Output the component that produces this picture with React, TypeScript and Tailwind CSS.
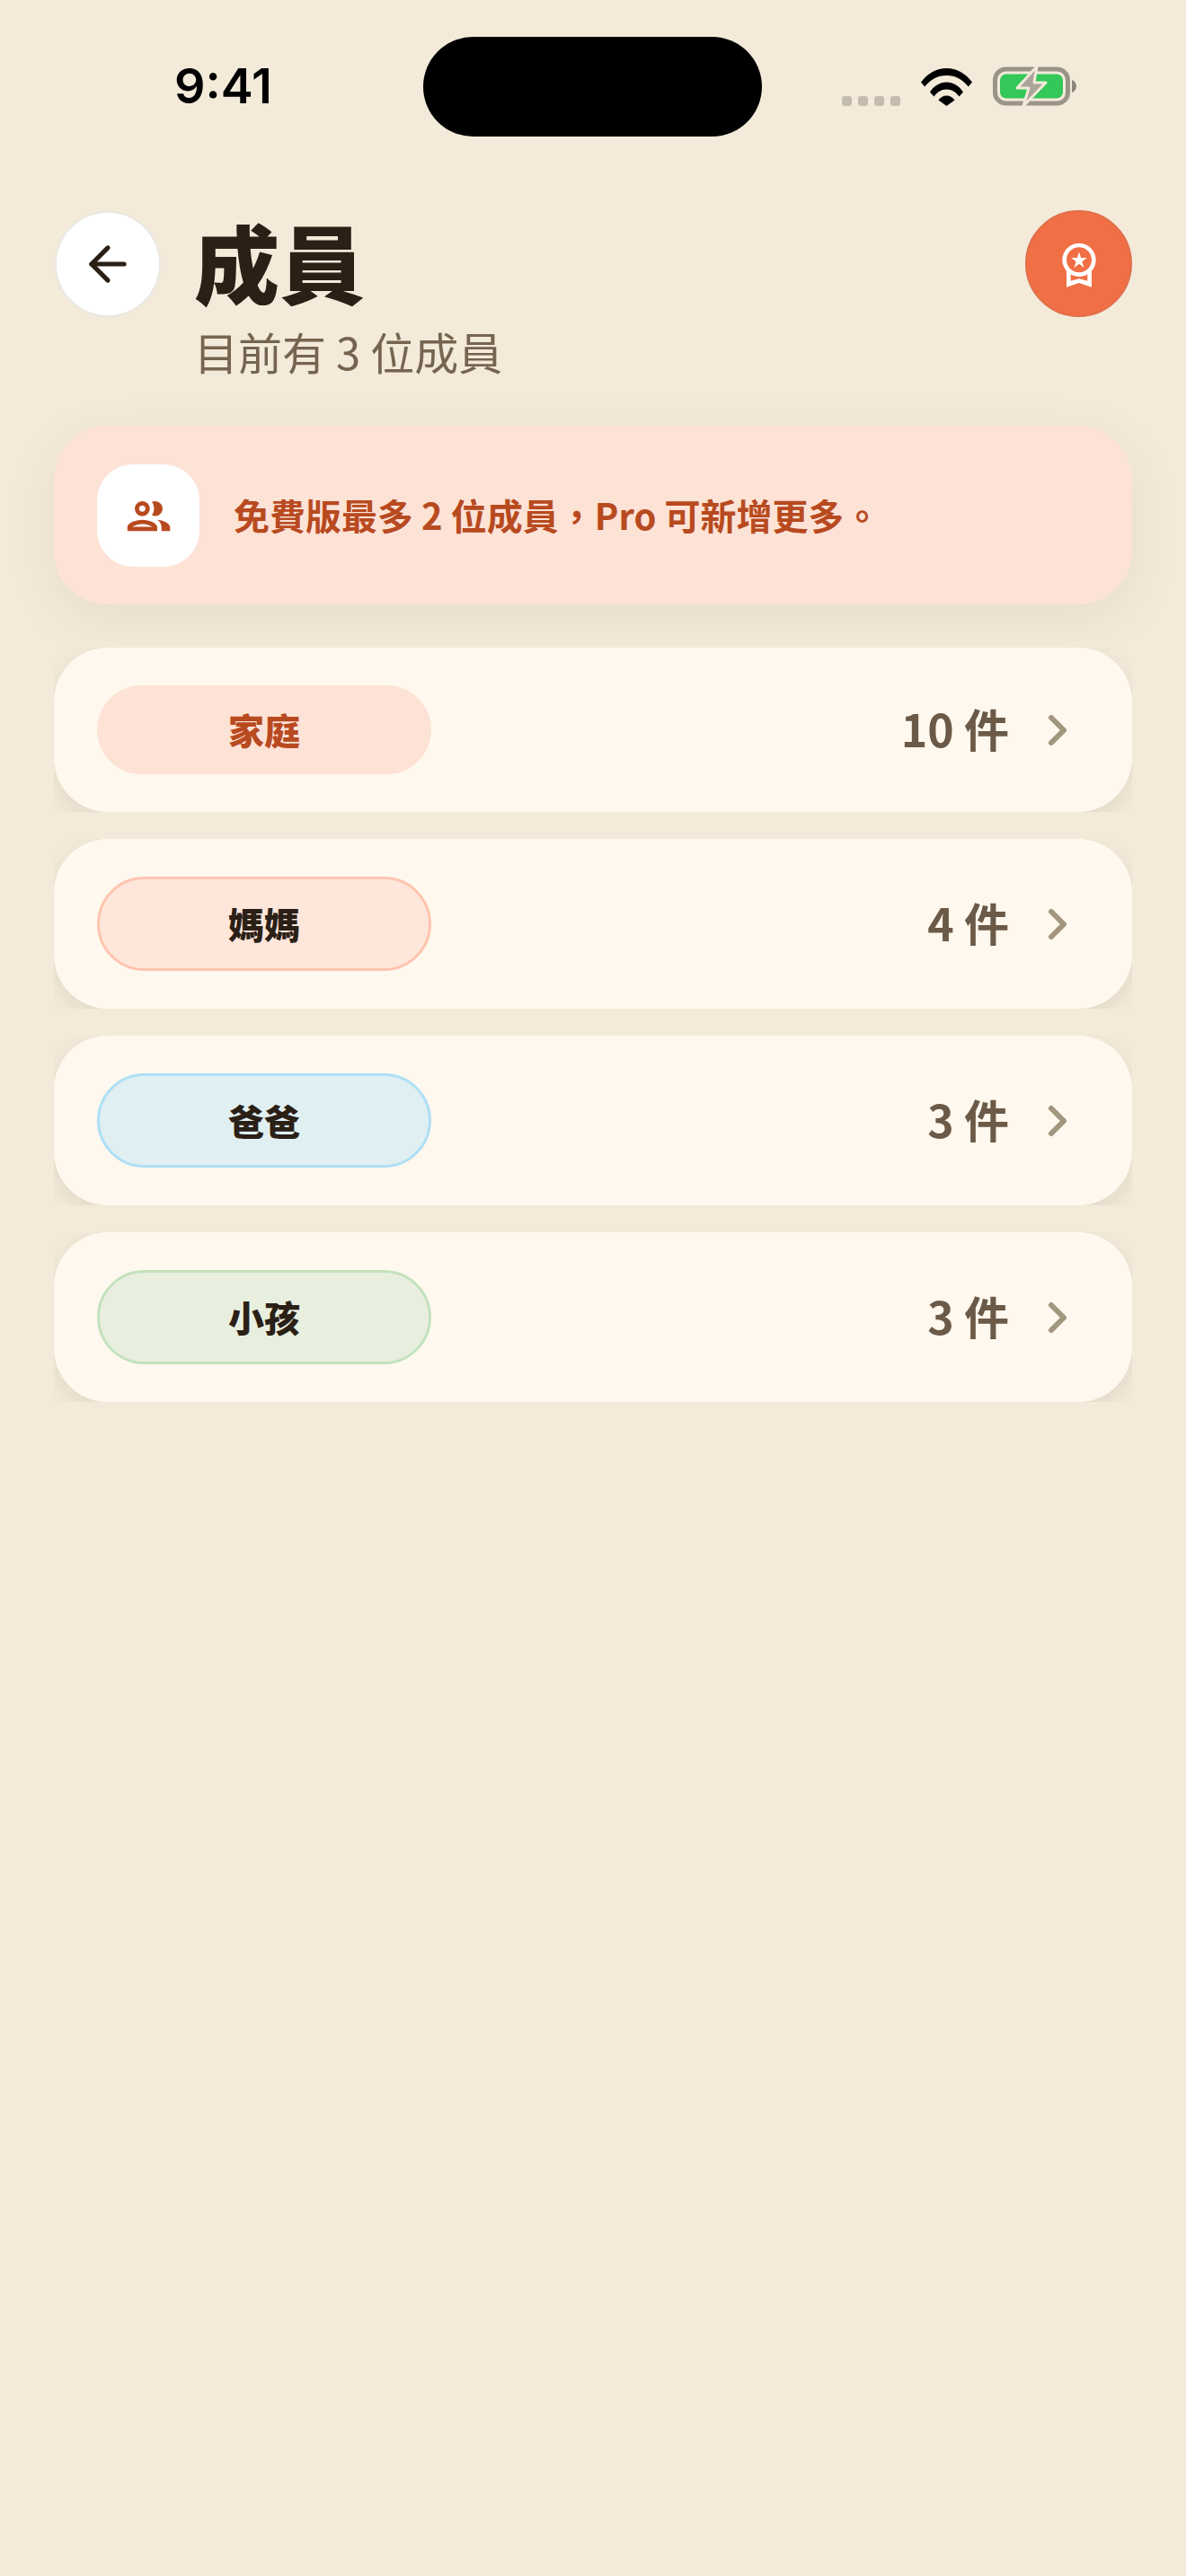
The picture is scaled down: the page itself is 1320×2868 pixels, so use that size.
import { ArrowLeft, ChevronRight } from "lucide-react";
import { MdOutlinePeople, MdOutlineWorkspacePremium } from "react-icons/md";

const members = [
  { name: "家庭", count: "10 件", pill: "bg-[#fde2d6] text-[#b84a20]" },
  { name: "媽媽", count: "4 件", pill: "bg-[#ffe6da] border-[3px] border-[#ffc4af] text-[#2a2016]" },
  { name: "爸爸", count: "3 件", pill: "bg-[#e0eff1] border-[3px] border-[#aedff6] text-[#2a2016]" },
  { name: "小孩", count: "3 件", pill: "bg-[#e9efdf] border-[3px] border-[#c3e2bd] text-[#2a2016]" },
];

function StatusBar() {
  return (
    <div className="relative flex h-[152px] items-end justify-between">
      <div className="absolute left-[471px] top-[41px] h-[111px] w-[377px] rounded-[56px] bg-black" />
      <span className="mb-[29px] ml-[194px] font-['Inter'] text-[54px] font-semibold leading-[54px] text-black">
        9:41
      </span>
      <div className="mb-[34px] mr-[122px] flex items-end">
        <div className="flex gap-[7px]">
          <span className="h-[11px] w-[11px] rounded-[3px] bg-[#c4bcae]" />
          <span className="h-[11px] w-[11px] rounded-[3px] bg-[#c4bcae]" />
          <span className="h-[11px] w-[11px] rounded-[3px] bg-[#c4bcae]" />
          <span className="h-[11px] w-[11px] rounded-[3px] bg-[#c4bcae]" />
        </div>
        <svg className="ml-[23px]" width="57" height="42" viewBox="0 0 57 42">
          <path fill="#000" d="M0 15.5C7.5 5.5 17.5 0 28.500 0S49.500 5.500 57 15.500L52.800 20.500C46.500 12.500 38 8 28.500 8S10.500 12.500 4.200 20.500Z" />
          <path fill="#000" d="M10 26.500C14.500 19.500 21 15.500 28.500 15.500S42.500 19.500 47 26.500L42.500 31.500C39 26.500 34.500 23.500 28.500 23.500S18 26.500 14.500 31.500Z" />
          <path fill="#000" d="M19.500 35.500C21.500 32.500 24.500 30.500 28.500 30.500S35.500 32.500 37.500 35.500L28.500 42Z" />
        </svg>
        <svg className="ml-[23px]" width="93" height="44" viewBox="0 0 93 44">
          <rect x="2.500" y="3" width="81" height="38" rx="12" fill="none" stroke="#9a9488" strokeWidth="5" />
          <rect x="8" y="8.500" width="70" height="27" rx="7" fill="#34c759" />
          <path fill="#aca59a" stroke="#f3eada" strokeWidth="3" strokeLinejoin="round" d="M49 0L27 24H40L34 44L59 18H46Z" />
          <path fill="#8b857a" d="M88 15C91 16 93 19 93 22S91 28 88 29Z" />
        </svg>
      </div>
    </div>
  );
}

function Header() {
  return (
    <div className="mt-[82px] flex items-start justify-between pl-[61px] pr-[60px]">
      <div className="flex items-start">
        <button className="mt-px flex h-[118px] w-[118px] items-center justify-center rounded-full border-2 border-[#ebe8e3] bg-white text-[#2a2016]">
          <ArrowLeft size={62} strokeWidth={2} />
        </button>
        <div className="ml-[37px] pt-[2px]">
          <h1 className="text-[95px] font-black leading-[110px] text-[#2a2016]">成員</h1>
          <p className="mt-[10px] text-[49px] font-normal leading-[70px] text-[#75644f]">目前有 3 位成員</p>
        </div>
      </div>
      <button className="flex h-[119px] w-[119px] items-center justify-center rounded-full border-2 border-[#e0704c] bg-[#f06f45] text-white">
        <MdOutlineWorkspacePremium size={56} />
      </button>
    </div>
  );
}

function MemberRow({ name, count, pill }: { name: string; count: string; pill: string }) {
  return (
    <div className="overflow-hidden">
      <div className="flex items-center justify-between rounded-[60px] bg-[#fff8ee] py-[42px] pl-[48px] pr-[55px] shadow-[0_8px_24px_rgba(80,60,30,0.1)]">
        <div className={`flex w-[372px] items-center justify-center rounded-full py-[15px] text-[40px] font-black leading-[69px] ${pill}`}>
          {name}
        </div>
        <div className="flex items-center gap-[26px]">
          <span className="pb-[5px] text-[50px] font-bold leading-[70px] text-[#6b5a47]">{count}</span>
          <ChevronRight className="text-[#a3967f]" size={56} strokeWidth={2.570} />
        </div>
      </div>
    </div>
  );
}

export default function App() {
  return (
    <div className="min-h-[2868px] bg-[#f3eada] font-['Noto_Sans_CJK_TC','Noto_Sans',sans-serif]">
      <StatusBar />
      <Header />
      <div className="mx-[60px] mt-[48px]">
        <div className="flex items-center gap-[38px] rounded-[60px] bg-[#fde2d6] pb-[42px] pl-[48px] pr-[48px] pt-[43px] shadow-[0_16px_60px_rgba(80,60,30,0.07)]">
          <div className="flex h-[114px] w-[114px] items-center justify-center rounded-[40px] bg-white text-[#b84a20]">
            <MdOutlinePeople size={57} />
          </div>
          <p className="pb-[3px] text-[40px] font-bold leading-[60px] text-[#b84a20]">免費版最多 2 位成員，Pro 可新增更多。</p>
        </div>
        <div className="mt-[48px] flex flex-col gap-[30px]">
          {members.map((m) => (
            <MemberRow key={m.name} name={m.name} count={m.count} pill={m.pill} />
          ))}
        </div>
      </div>
    </div>
  );
}
